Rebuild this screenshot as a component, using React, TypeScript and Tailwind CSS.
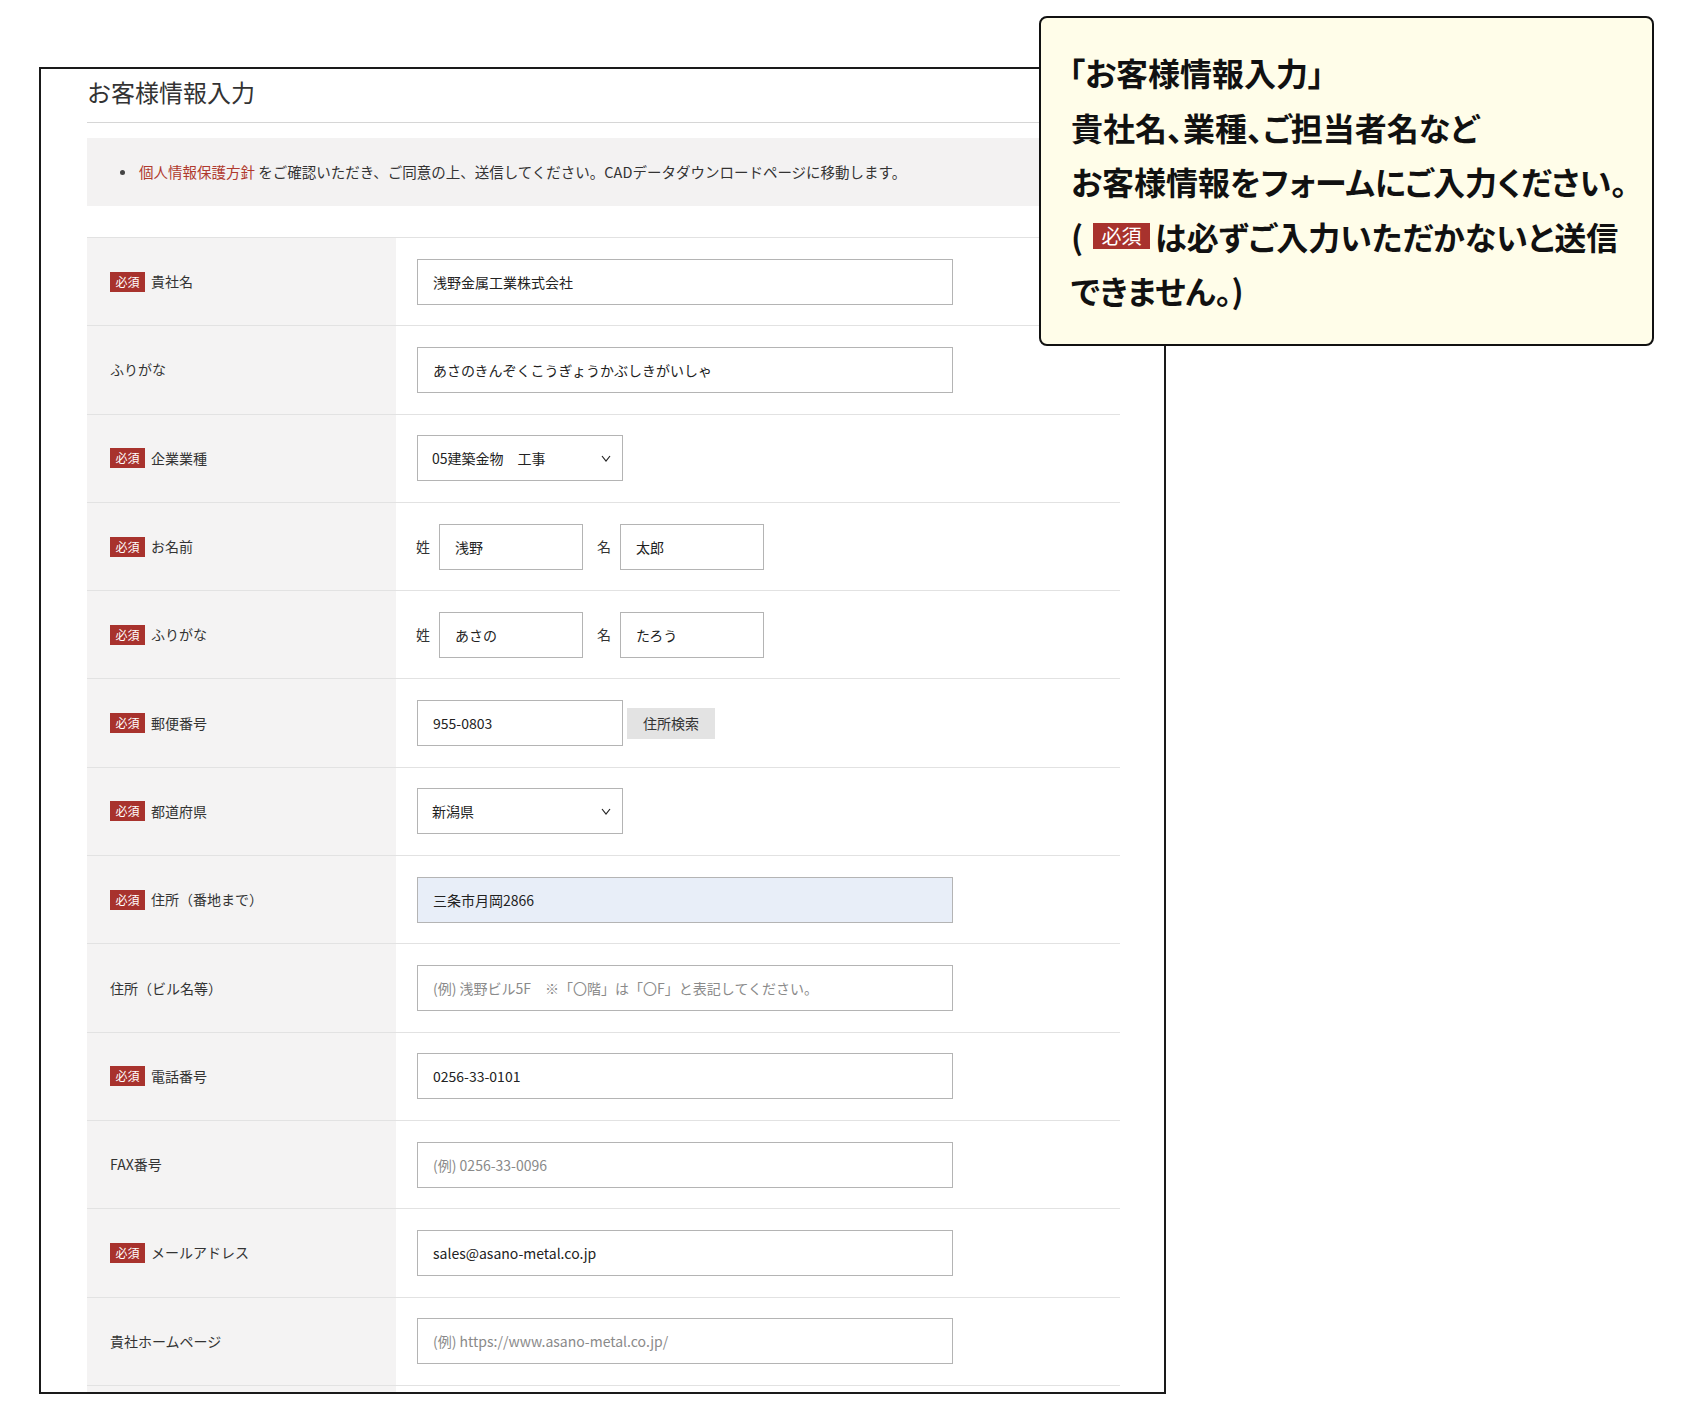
import React from 'react';

const font = { fontFamily: '"Noto Sans CJK JP", "Noto Sans", sans-serif' };

const Badge: React.FC = () => (
  <span className="inline-flex items-center justify-center w-[35px] h-[20px] bg-[#a8322d] text-white text-[12px] leading-none mr-[6px]">
    必須
  </span>
);

const TextInput: React.FC<{ value?: string; placeholder?: string; w?: string; filled?: boolean }> = ({
  value,
  placeholder,
  w = 'w-[536px]',
  filled,
}) => (
  <input
    readOnly
    defaultValue={value}
    placeholder={placeholder}
    className={`${w} h-[46px] border border-[#b4b4b4] px-[15px] text-[14px] text-[#222] outline-none placeholder:text-[#8a8a8a] ${
      filled ? 'bg-[#e8eef8]' : 'bg-white'
    }`}
    style={font}
  />
);

const Select: React.FC<{ value: string }> = ({ value }) => (
  <div className="w-[206px] h-[46px] border border-[#b4b4b4] bg-white pl-[14px] pr-[11px] flex items-center justify-between text-[14px] text-[#222]">
    <span className="whitespace-pre">{value}</span>
    <svg width="10" height="7" viewBox="0 0 10 7" fill="none">
      <path d="M1 1l4 5 4-5" stroke="#222" strokeWidth="1.2" />
    </svg>
  </div>
);

const NamePair: React.FC<{ a: string; b: string }> = ({ a, b }) => (
  <div className="flex items-center text-[14px] text-[#333] -ml-[1px]">
    <span className="mr-[9px]">姓</span>
    <TextInput value={a} w="w-[144px]" />
    <span className="ml-[14px] mr-[9px]">名</span>
    <TextInput value={b} w="w-[144px]" />
  </div>
);

type Row = { label: string; req?: boolean; field: React.ReactNode };

const rows: Row[] = [
  { label: '貴社名', req: true, field: <TextInput value="浅野金属工業株式会社" /> },
  { label: 'ふりがな', field: <TextInput value="あさのきんぞくこうぎょうかぶしきがいしゃ" /> },
  { label: '企業業種', req: true, field: <Select value="05建築金物　工事" /> },
  { label: 'お名前', req: true, field: <NamePair a="浅野" b="太郎" /> },
  { label: 'ふりがな', req: true, field: <NamePair a="あさの" b="たろう" /> },
  {
    label: '郵便番号',
    req: true,
    field: (
      <div className="flex items-center">
        <TextInput value="955-0803" w="w-[206px]" />
        <button className="ml-[4px] w-[88px] h-[31px] bg-[#e3e3e3] text-[14px] text-[#333]" style={font}>
          住所検索
        </button>
      </div>
    ),
  },
  { label: '都道府県', req: true, field: <Select value="新潟県" /> },
  { label: '住所（番地まで）', req: true, field: <TextInput value="三条市月岡2866" filled /> },
  { label: '住所（ビル名等）', field: <TextInput placeholder="(例) 浅野ビル5F　※「〇階」は「〇F」と表記してください。" /> },
  { label: '電話番号', req: true, field: <TextInput value="0256-33-0101" /> },
  { label: 'FAX番号', field: <TextInput placeholder="(例) 0256-33-0096" /> },
  { label: 'メールアドレス', req: true, field: <TextInput value="sales@asano-metal.co.jp" /> },
  { label: '貴社ホームページ', field: <TextInput placeholder="(例) https://www.asano-metal.co.jp/" /> },
  { label: '', field: null },
];

export default function App() {
  return (
    <div className="relative w-[1706px] h-[1420px] bg-white overflow-hidden" style={font}>
      {/* フォーム枠 */}
      <div className="ml-[39px] mt-[67px] w-[1127px] h-[1327px] border-2 border-[#1a1a1a] overflow-hidden pl-[46px]">
        <div className="w-[1033px]">
          <div className="h-[54px] pt-[7px] border-b border-[#d6d6d6]">
            <h1 className="text-[24px] leading-[32px] text-[#333]">お客様情報入力</h1>
          </div>

          <div className="mt-[15px] h-[68px] bg-[#f3f2f2] flex items-center pl-[33px] text-[14.5px] text-[#333]">
            <span className="w-[5px] h-[5px] rounded-full bg-[#444] mr-[14px]" />
            <span>
              <span className="text-[#b03a2e]">個人情報保護方針</span> をご確認いただき、ご同意の上、送信してください。CADデータダウンロードページに移動します。
            </span>
          </div>

          <div className="mt-[31px] border-t border-[#e2e2e2]">
            {rows.map((r, i) => (
              <div key={i} className="flex h-[88.3px] border-b border-[#e2e2e2]">
                <div className="w-[309px] bg-[#f4f3f3] pl-[23px] flex items-center text-[14px] text-[#333]">
                  {r.req && <Badge />}
                  <span>{r.label}</span>
                </div>
                <div className="flex-1 pl-[21px] flex items-center">{r.field}</div>
              </div>
            ))}
          </div>
        </div>
      </div>

      {/* 吹き出し */}
      <div className="absolute left-[1039px] top-[16px] w-[615px] h-[330px] border-[2.5px] border-[#111] rounded-[8px] bg-[#fffde9] pl-[30px] pt-[27px] text-[32px] font-bold leading-[54.5px] text-[#111] whitespace-nowrap [font-feature-settings:'palt']">
        <div className="-ml-[2px]">「お客様情報入力」</div>
        <div>貴社名、業種、ご担当者名など</div>
        <div>お客様情報をフォームにご入力ください。</div>
        <div className="flex items-center">
          <span>(</span>
          <span className="ml-[10px] mr-[5px] inline-flex items-center justify-center w-[57px] h-[26px] bg-[#a8322d] text-white text-[20px] font-normal leading-none">
            必須
          </span>
          <span>は必ずご入力いただかないと送信</span>
        </div>
        <div>できません。)</div>
      </div>
    </div>
  );
}
